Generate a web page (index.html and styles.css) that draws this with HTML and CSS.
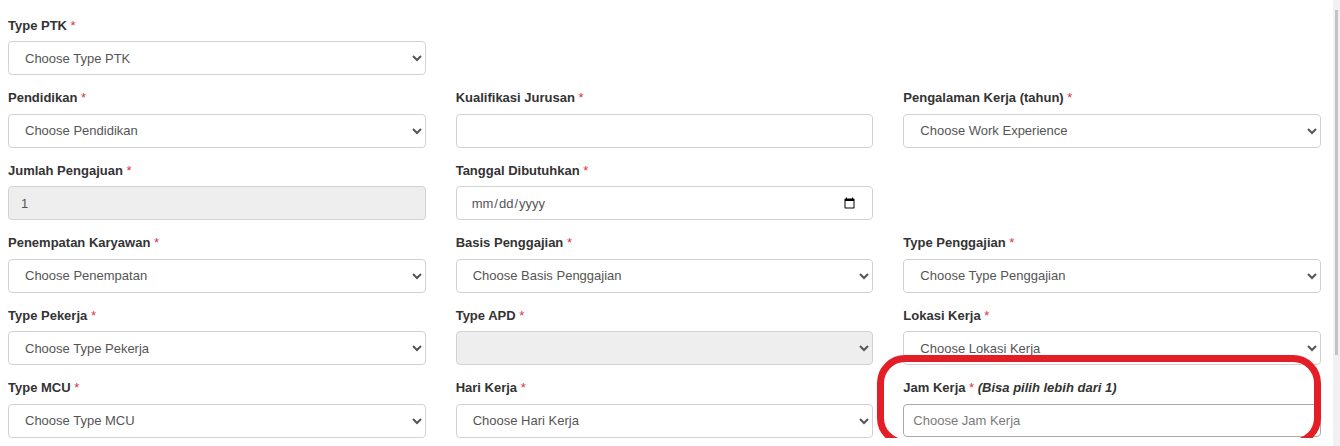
FILE: index.html
```html
<!DOCTYPE html>
<html lang="id">
<head>
<meta charset="utf-8">
<title>Form PTK</title>
<link rel="stylesheet" href="styles.css">
</head>
<body>
<div class="page">
  <form class="form-grid">
    <div class="form-group">
      <label class="lbl">Type PTK <span class="req">*</span></label>
      <select class="ctrl"><option>Choose Type PTK</option></select>
    </div>
    <div class="empty"></div>
    <div class="empty"></div>

    <div class="form-group">
      <label class="lbl">Pendidikan <span class="req">*</span></label>
      <select class="ctrl"><option>Choose Pendidikan</option></select>
    </div>
    <div class="form-group">
      <label class="lbl">Kualifikasi Jurusan <span class="req">*</span></label>
      <input class="ctrl" type="text">
    </div>
    <div class="form-group">
      <label class="lbl">Pengalaman Kerja (tahun) <span class="req">*</span></label>
      <select class="ctrl"><option>Choose Work Experience</option></select>
    </div>

    <div class="form-group">
      <label class="lbl">Jumlah Pengajuan <span class="req">*</span></label>
      <input class="ctrl" type="text" value="1" disabled>
    </div>
    <div class="form-group">
      <label class="lbl">Tanggal Dibutuhkan <span class="req">*</span></label>
      <input class="ctrl date" type="date">
    </div>
    <div class="empty"></div>

    <div class="form-group">
      <label class="lbl">Penempatan Karyawan <span class="req">*</span></label>
      <select class="ctrl"><option>Choose Penempatan</option></select>
    </div>
    <div class="form-group">
      <label class="lbl">Basis Penggajian <span class="req">*</span></label>
      <select class="ctrl"><option>Choose Basis Penggajian</option></select>
    </div>
    <div class="form-group">
      <label class="lbl">Type Penggajian <span class="req">*</span></label>
      <select class="ctrl"><option>Choose Type Penggajian</option></select>
    </div>

    <div class="form-group">
      <label class="lbl">Type Pekerja <span class="req">*</span></label>
      <select class="ctrl"><option>Choose Type Pekerja</option></select>
    </div>
    <div class="form-group">
      <label class="lbl">Type APD <span class="req">*</span></label>
      <select class="ctrl" disabled><option></option></select>
    </div>
    <div class="form-group">
      <label class="lbl">Lokasi Kerja <span class="req">*</span></label>
      <select class="ctrl"><option>Choose Lokasi Kerja</option></select>
    </div>

    <div class="form-group">
      <label class="lbl">Type MCU <span class="req">*</span></label>
      <select class="ctrl"><option>Choose Type MCU</option></select>
    </div>
    <div class="form-group">
      <label class="lbl">Hari Kerja <span class="req">*</span></label>
      <select class="ctrl"><option>Choose Hari Kerja</option></select>
    </div>
    <div class="form-group">
      <label class="lbl">Jam Kerja <span class="req">*</span> <em class="hint">(Bisa pilih lebih dari 1)</em></label>
      <div class="multi"><span class="placeholder">Choose Jam Kerja</span></div>
    </div>
  </form>
  <div class="highlight"></div>
</div>
<div class="scrollbar"><div class="thumb"></div></div>
</body>
</html>
```

FILE: styles.css
```css
html, body {
  margin: 0;
  padding: 0;
  background: #ffffff;
  overflow: hidden;
}

body {
  font-family: "Liberation Sans", Arial, sans-serif;
  font-size: 13px;
  color: #333333;
}

.page {
  position: relative;
  padding: 15.5px 19px 0 8px;
}

.form-grid {
  display: grid;
  grid-template-columns: repeat(3, 1fr);
  column-gap: 30px;
  row-gap: 13px;
}

.lbl {
  display: block;
  font-weight: bold;
  font-size: 13px;
  line-height: 19.5px;
  margin-bottom: 6px;
  color: #333333;
  white-space: nowrap;
}

.req {
  color: #dc3545;
  font-weight: normal;
}

.hint {
  font-style: italic;
  font-weight: bold;
}

.ctrl {
  display: block;
  box-sizing: border-box;
  width: 100%;
  height: 34px;
  margin: 0;
  padding: 0 12px;
  font-family: "Liberation Sans", Arial, sans-serif;
  font-size: 13px;
  color: #555555;
  background-color: #ffffff;
  border: 1px solid #d2d2d2;
  border-radius: 4px;
}

.date {
  padding: 0 14px;
}

.ctrl:disabled {
  background-color: #eeeeee;
  opacity: 1;
  color: #555555;
}

.multi {
  box-sizing: border-box;
  height: 33px;
  border: 1px solid #aaaaaa;
  border-radius: 4px;
  padding: 0 9px;
  display: flex;
  align-items: center;
  background: #ffffff;
}

.placeholder {
  color: #7a7a7a;
  font-size: 13px;
}

.highlight {
  position: absolute;
  left: 877px;
  top: 355px;
  width: 444px;
  height: 91px;
  box-sizing: border-box;
  border: 7px solid #e31e26;
  border-radius: 28px;
  pointer-events: none;
}

.scrollbar {
  position: fixed;
  top: 0;
  right: 0;
  width: 7px;
  height: 100%;
  background: #f1f1f1;
}

.thumb {
  margin: 10px 0 0 2px;
  width: 3px;
  height: 345px;
  background: #c4c4c4;
}
```
